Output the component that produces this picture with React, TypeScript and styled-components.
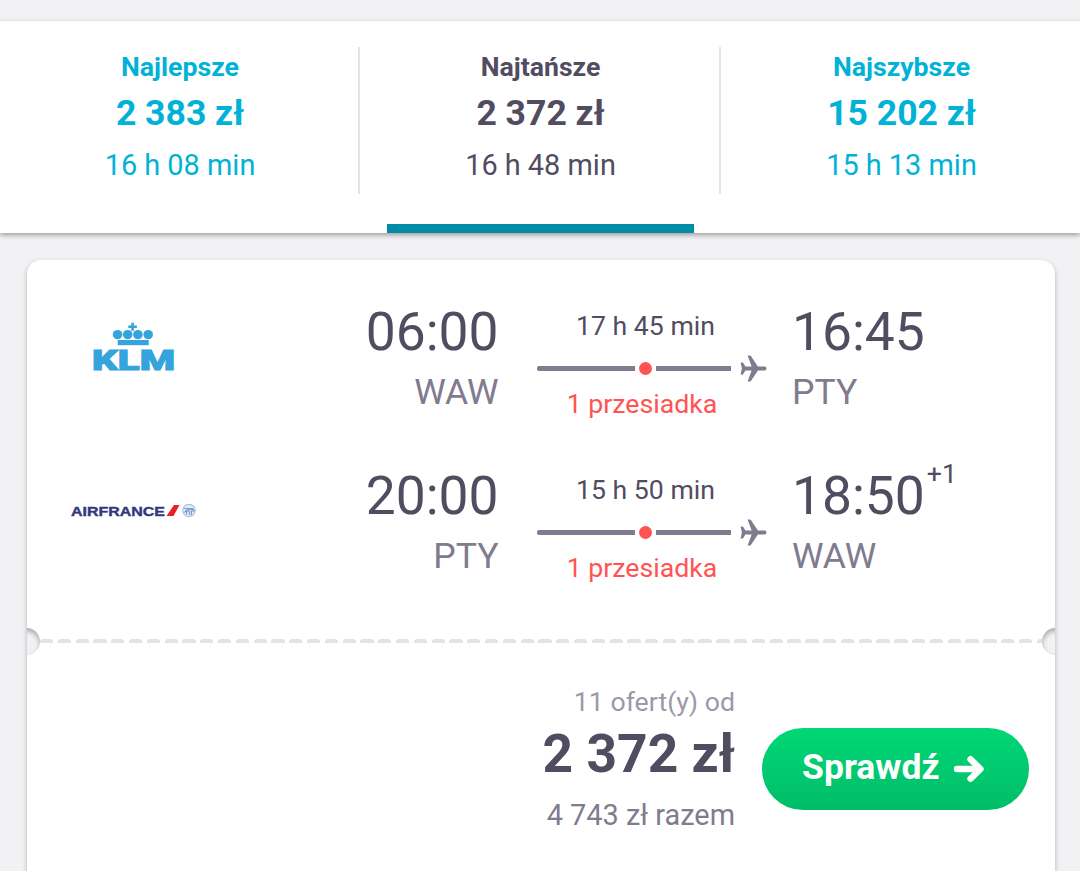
import React from 'react';
import styled, { createGlobalStyle } from 'styled-components';

const GlobalStyle = createGlobalStyle`
  * {
    box-sizing: border-box;
  }

  body {
    margin: 0;
    background: #f2f2f5;
    color: #524c61;
    font-family: Roboto, "Liberation Sans", sans-serif;
  }
`;

const Page = styled.div`
  height: 871px;
  padding-top: 21px;
  overflow: hidden;
`;

// Sort tabs
const SortBar = styled.nav`
  display: grid;
  grid-template-columns: 360px 361px 359px;
  height: 212px;
  background: #fff;
  box-shadow: 0 2px 5px rgba(0, 0, 0, 0.36);
`;

const SortTab = styled.div<{ $active?: boolean }>`
  display: flex;
  flex-direction: column;
  justify-content: space-between;
  padding-top: 26px;
  color: ${({ $active }) => ($active ? '#524c61' : '#00b2d6')};

  &:not(:last-child) > div:first-child {
    padding-left: 2px;
    border-right: 2px solid #e3e3e8;
  }

  &:last-child > div:first-child {
    padding-left: 2px;
  }
`;

const TabBody = styled.div`
  width: 100%;
  height: 147px;
  text-align: center;
`;

const TabName = styled.div`
  font-size: 26.67px;
  font-weight: 700;
  line-height: 40px;
`;

const TabPrice = styled.div`
  font-size: 35.56px;
  font-weight: 700;
  line-height: 53px;
`;

const TabTime = styled.div`
  font-size: 28.9px;
  line-height: 50px;
`;

const Underline = styled.div`
  width: 307px;
  height: 9px;
  margin-left: 27px;
  background: #008ca8;
`;

// Ticket card
const Card = styled.article`
  width: 1028px;
  height: 640px;
  margin: 27px 0 0 27px;
  background: #fff;
  border-radius: 14px;
  box-shadow: 0 2px 5px rgba(0, 0, 0, 0.26);
`;

const Legs = styled.section`
  height: 368px;
  padding-top: 38px;
`;

const Leg = styled.div`
  display: flex;
  height: 164px;
`;

const Carrier = styled.div`
  width: 213px;
  height: 98px;
  display: flex;
  align-items: center;
  justify-content: center;
`;

const Stop = styled.div<{ $align: 'left' | 'right' }>`
  width: ${({ $align }) => ($align === 'right' ? '258.5px' : '240px')};
  text-align: ${({ $align }) => $align};
`;

const Hour = styled.div`
  display: flex;
  justify-content: inherit;
  font-size: 53.33px;
  line-height: 68px;
`;

const HourText = styled.span`
  flex: 1;
`;

const HourWithShift = styled(HourText)`
  flex: none;
`;

const DayShift = styled.sup`
  margin-left: 2px;
  font-size: 26.67px;
  line-height: 24px;
`;

const Airport = styled.div`
  color: #817b8f;
  font-size: 35.56px;
  line-height: 52px;
`;

const Route = styled.div`
  width: 230px;
  margin: 0 25px 0 38.5px;
`;

const RouteText = styled.div`
  font-size: 26.67px;
  text-align: center;
`;

const Duration = styled(RouteText)`
  width: 217px;
  height: 55px;
  line-height: 57px;
`;

const Changes = styled(RouteText)`
  width: 210px;
  color: #ff5452;
  line-height: 40px;
`;

const Track = styled.div`
  display: flex;
  align-items: center;
  height: 31px;
`;

const Line = styled.div<{ $width: number; $start?: boolean }>`
  width: ${({ $width }) => $width}px;
  height: 5px;
  background: #817b8f;
  border-radius: ${({ $start }) => ($start ? '2px 0 0 2px' : '0')};
`;

const Dot = styled.div`
  width: 13px;
  height: 13px;
  margin: 0 4px;
  border-radius: 50%;
  background: #ff5452;
`;

const PlaneIcon = styled.svg`
  margin-left: 8.5px;
`;

// Perforated edge between flight info and price
const Perforation = styled.div`
  position: relative;
  height: 27px;
  padding: 11px 0 0 13px;
  overflow: hidden;
`;

const Dashes = styled.div`
  display: flex;
  gap: 4.5px;
`;

const Dash = styled.span`
  flex: none;
  width: 13.3px;
  height: 4px;
  background: #e3e2e9;
  border-radius: 3px 3px 0 0;
`;

const Notch = styled.span<{ $side: 'left' | 'right' }>`
  position: absolute;
  top: 0;
  ${({ $side }) => $side}: -14px;
  width: 27px;
  height: 27px;
  border-radius: 50%;
  background: #f2f2f5;
  box-shadow: inset 0 3px 5px rgba(0, 0, 0, 0.3);
`;

const Summary = styled.section`
  display: flex;
  justify-content: flex-end;
  padding: 27px 26px 0 0;
`;

const Prices = styled.div`
  text-align: right;
`;

const Offers = styled.div`
  color: #9c98a8;
  font-size: 26.67px;
  line-height: 40px;
`;

const Price = styled.div`
  height: 63px;
  font-size: 53.33px;
  font-weight: 700;
  line-height: 65px;
`;

const Total = styled.div`
  color: #817b8f;
  font-size: 28.9px;
  line-height: 60px;
`;

const CheckButton = styled.button`
  display: flex;
  align-items: center;
  width: 267px;
  height: 82px;
  margin: 46px 0 0 27px;
  padding: 0 0 4px 40px;
  border: 0;
  border-radius: 41px;
  background: linear-gradient(#00d775, #00bd68);
  color: #fff;
  font-family: inherit;
  font-size: 35.56px;
  font-weight: 700;
`;

const ArrowIcon = styled.svg`
  margin: 3px 0 0 13px;
`;

const KlmLogo = () => (
  <svg width="88" height="64" viewBox="-2 -6 88 64" fill="#35a3dc">
    <path d="M39.3 1.8h2.6v2.7h3v2.4h-3v2.8h-2.6V6.9h-3V4.5h3z" />
    <ellipse cx="25.6" cy="13.6" rx="4.8" ry="4.7" />
    <ellipse cx="35.7" cy="13.6" rx="4.8" ry="4.7" />
    <ellipse cx="45.9" cy="13.6" rx="4.8" ry="4.7" />
    <ellipse cx="56.2" cy="13.6" rx="4.8" ry="4.7" />
    <rect x="25.7" y="19" width="31" height="5.2" />
    <text
      x="0"
      y="49.2"
      fontFamily="Roboto"
      fontWeight="900"
      fontSize="28"
      stroke="#35a3dc"
      strokeWidth="1"
      textLength="83"
      lengthAdjust="spacingAndGlyphs"
    >
      KLM
    </text>
  </svg>
);

const AirFranceLogo = () => (
  <svg width="128" height="20" viewBox="0 -2 128 20">
    <text
      x="1"
      y="12.5"
      fill="#34367e"
      stroke="#34367e"
      strokeWidth="0.4"
      fontFamily="Liberation Sans"
      fontWeight="700"
      fontSize="13"
      textLength="94"
      lengthAdjust="spacingAndGlyphs"
    >
      AIRFRANCE
    </text>
    <path d="M96.5 13 104 2h5.5l-6 11z" fill="#e8202d" />
    <circle cx="119" cy="7.5" r="6.2" fill="#e3ecf7" stroke="#a9c0e1" strokeWidth="1.2" />
    <path d="M114 5.5h9.5M114.5 9.5c2-4 6-4 10-2M116.5 11.5V8h3v4m2 0V8h3" fill="none" stroke="#7d9bcc" strokeWidth="1.2" />
  </svg>
);

const legs = [
  { logo: <KlmLogo />, dep: '06:00', from: 'WAW', time: '17 h 45 min', arr: '16:45', to: 'PTY' },
  { logo: <AirFranceLogo />, dep: '20:00', from: 'PTY', time: '15 h 50 min', arr: '18:50', to: 'WAW', shift: '+1' },
];

const tabs = [
  { name: 'Najlepsze', price: '2 383 zł', time: '16 h 08 min' },
  { name: 'Najtańsze', price: '2 372 zł', time: '16 h 48 min', active: true },
  { name: 'Najszybsze', price: '15 202 zł', time: '15 h 13 min' },
];

const App: React.FC = () => (
  <Page>
    <GlobalStyle />
    <SortBar>
      {tabs.map((tab) => (
        <SortTab key={tab.name} $active={tab.active}>
          <TabBody>
            <TabName>{tab.name}</TabName>
            <TabPrice>{tab.price}</TabPrice>
            <TabTime>{tab.time}</TabTime>
          </TabBody>
          {tab.active && <Underline />}
        </SortTab>
      ))}
    </SortBar>

    <Card>
      <Legs>
        {legs.map((leg) => (
          <Leg key={leg.dep}>
            <Carrier>{leg.logo}</Carrier>
            <Stop $align="right">
              <Hour>
                <HourText>{leg.dep}</HourText>
              </Hour>
              <Airport>{leg.from}</Airport>
            </Stop>
            <Route>
              <Duration>{leg.time}</Duration>
              <Track>
                <Line $width={98} $start />
                <Dot />
                <Line $width={75} />
                <PlaneIcon width="27" height="27" viewBox="0 0 27 27" fill="#817b8f">
                  <path d="M7.6 0.4h2.2q.7 0 1.1.6l7 10.6h6.7a1.9 1.9 0 0 1 0 3.8h-6.7l-7 10.6q-.4.6-1.1.6H7.6l4-11.2H5.4l-2.1 3.5q-.3.5-.9.5H.6l1.3-5.9L.6 7.6h1.8q.6 0 .9.5l2.1 3.5h6.2z" />
                </PlaneIcon>
              </Track>
              <Changes>1 przesiadka</Changes>
            </Route>
            <Stop $align="left">
              <Hour>
                <HourWithShift>{leg.arr}</HourWithShift>
                {leg.shift && <DayShift>{leg.shift}</DayShift>}
              </Hour>
              <Airport>{leg.to}</Airport>
            </Stop>
          </Leg>
        ))}
      </Legs>

      <Perforation>
        <Dashes>
          {Array.from({ length: 57 }, (_, i) => (
            <Dash key={i} />
          ))}
        </Dashes>
        <Notch $side="left" />
        <Notch $side="right" />
      </Perforation>

      <Summary>
        <Prices>
          <Offers>11 ofert(y) od</Offers>
          <Price>2 372 zł</Price>
          <Total>4 743 zł razem</Total>
        </Prices>
        <CheckButton>
          Sprawdź
          <ArrowIcon width="32" height="28" viewBox="0 0 32 28" fill="none" stroke="#fff" strokeWidth="6.4" strokeLinecap="round" strokeLinejoin="round">
            <path d="M4 14h23M17.5 4.2l10 9.8-10 9.8" />
          </ArrowIcon>
        </CheckButton>
      </Summary>
    </Card>
  </Page>
);

export default App;
